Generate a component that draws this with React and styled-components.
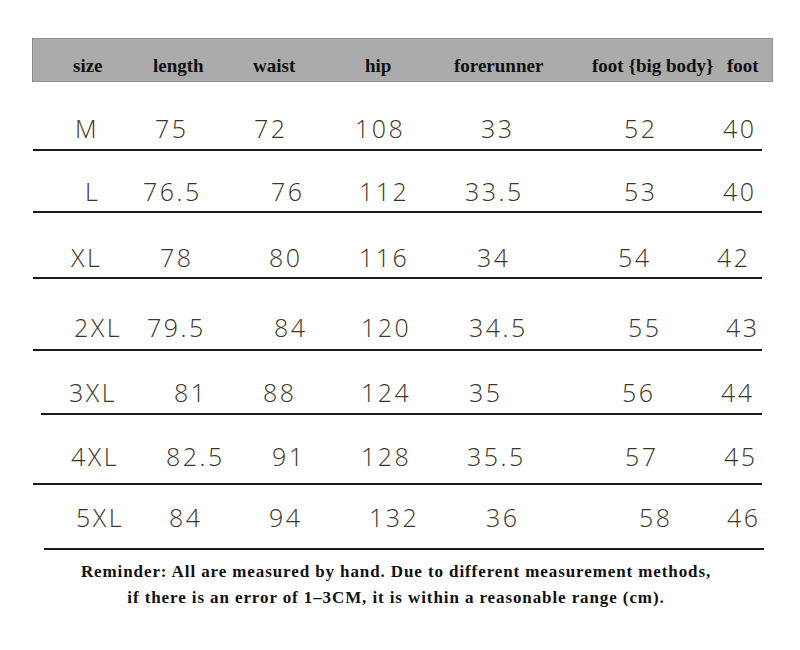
import React from "react";
import styled, { createGlobalStyle } from "styled-components";

const GlobalStyle = createGlobalStyle`
  html, body { margin: 0; padding: 0; background: #ffffff; }
  #root { width: 800px; }
`;

const COLS = [60, 140, 240, 345, 450, 585, 705, 773];
const TEMPLATE = COLS.slice(1)
  .map((c, i) => `${c - COLS[i]}px`)
  .join(" ");

const Page = styled.div`
  width: 800px;
  height: 650px;
  overflow: hidden;
  padding-top: 38px;
  box-sizing: border-box;
`;

const HeaderBar = styled.div`
  margin-left: 32px;
  width: 741px;
  height: 44px;
  box-sizing: border-box;
  background: #ababab;
  border: 1px solid #8e8e8e;
  display: grid;
  grid-template-columns: ${TEMPLATE};
  align-items: end;
  padding-left: ${COLS[0] - 33}px;
  padding-bottom: 4px;
  font-family: "Liberation Serif", "Times New Roman", serif;
  font-weight: 700;
  font-size: 19px;
  line-height: 22px;
  color: #111111;
`;

const Row = styled.div`
  display: grid;
  grid-template-columns: ${TEMPLATE};
  padding-left: ${COLS[0]}px;
  margin-top: ${(p) => p.$mt}px;
  height: 30px;
  line-height: 30px;
  font-family: "Open Sans", "Noto Sans", sans-serif;
  font-weight: 300;
  font-size: 25px;
  letter-spacing: 2.5px;
  color: #3d3528;
`;

const Cell = styled.div`
  padding-left: ${(p) => p.$pad}px;
  white-space: nowrap;
`;

const Rule = styled.div`
  height: 2px;
  background: #1c1c1c;
  margin-top: ${(p) => p.$mt}px;
  margin-left: ${(p) => p.$left}px;
  width: ${(p) => p.$width}px;
`;

const Note = styled.p`
  margin: 9px 0 0 0;
  padding-right: 8px;
  text-align: center;
  font-family: "Liberation Serif", "Times New Roman", serif;
  font-weight: 700;
  font-size: 17px;
  letter-spacing: 0.9px;
  line-height: 26px;
  color: #111111;
`;

const headers = [
  { t: "size", x: 73 },
  { t: "length", x: 153 },
  { t: "waist", x: 253 },
  { t: "hip", x: 365 },
  { t: "forerunner", x: 454 },
  { t: "foot {big body}", x: 592 },
  { t: "foot", x: 727 },
];

const rows = [
  { v: ["M", "75", "72", "108", "33", "52", "40"], xs: [76, 156, 255, 356, 482, 625, 724], mt: 31, rmt: 6, rule: [33, 762] },
  { v: ["L", "76.5", "76", "112", "33.5", "53", "40"], xs: [86, 144, 272, 360, 466, 625, 724], mt: 25, rmt: 5, rule: [33, 762] },
  { v: ["XL", "78", "80", "116", "34", "54", "42"], xs: [72, 161, 270, 360, 478, 619, 718], mt: 29, rmt: 5, rule: [33, 762] },
  { v: ["2XL", "79.5", "84", "120", "34.5", "55", "43"], xs: [75, 148, 275, 362, 470, 629, 727], mt: 33, rmt: 7, rule: [33, 762] },
  { v: ["3XL", "81", "88", "124", "35", "56", "44"], xs: [70, 175, 264, 362, 470, 623, 722], mt: 26, rmt: 6, rule: [41, 762] },
  { v: ["4XL", "82.5", "91", "128", "35.5", "57", "45"], xs: [72, 167, 273, 362, 468, 626, 725], mt: 26, rmt: 12, rule: [33, 762] },
  { v: ["5XL", "84", "94", "132", "36", "58", "46"], xs: [77, 170, 270, 370, 487, 640, 728], mt: 17, rmt: 16, rule: [44, 764] },
];

export default function App() {
  return (
    <>
      <GlobalStyle />
      <Page>
        <HeaderBar>
          {headers.map((h, i) => (
            <Cell key={h.t} $pad={h.x - COLS[i]}>
              {h.t}
            </Cell>
          ))}
        </HeaderBar>
        {rows.map((r) => (
          <React.Fragment key={r.v[0]}>
            <Row $mt={r.mt}>
              {r.v.map((val, i) => (
                <Cell key={i} $pad={r.xs[i] - COLS[i] - 1}>
                  {val}
                </Cell>
              ))}
            </Row>
            <Rule $mt={r.rmt} $left={r.rule[0]} $width={r.rule[1] - r.rule[0]} />
          </React.Fragment>
        ))}
        <Note>
          Reminder: All are measured by hand. Due to different measurement methods,
          <br />
          if there is an error of 1–3CM, it is within a reasonable range (cm).
        </Note>
      </Page>
    </>
  );
}
